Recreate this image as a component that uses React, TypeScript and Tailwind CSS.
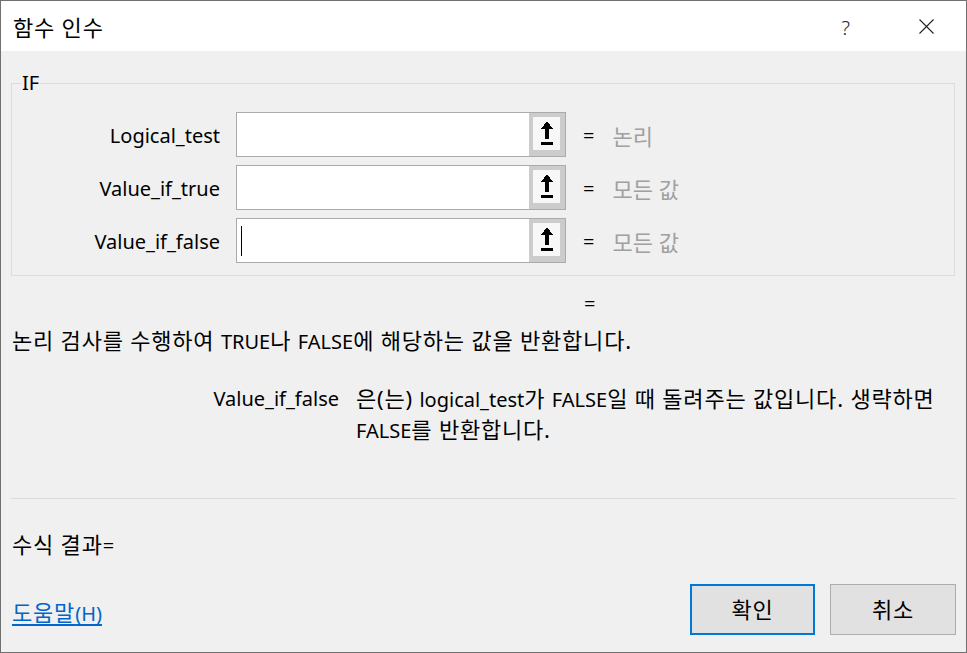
import React from 'react'

const FONT = "font-['Noto_Sans','Noto_Sans_CJK_KR',sans-serif]"

// Hangul runs are set a little larger so they take the width of the original dialog font
function K({ children }: { children: React.ReactNode }) {
  return <span className="text-[22px] tracking-[0.8px]">{children}</span>
}

function PickerIcon() {
  return (
    <svg width="14" height="25" viewBox="0 0 14 25" shapeRendering="crispEdges">
      <polygon points="7,0 13,8 9,8 9,18 5,18 5,8 1,8" fill="#000" />
      <rect x="1" y="21" width="12" height="3" fill="#000" />
    </svg>
  )
}

function ArgRow({ label, hint, caret }: { label: string; hint: string; caret?: boolean }) {
  return (
    <div className="flex items-center h-[45px]">
      <div className="w-[208px] text-right leading-[24px] pt-[3px]">{label}</div>
      <div className="ml-[16px] w-[330px] h-full border border-[#ababab] bg-white flex">
        <div className="flex-1 flex items-center pl-[4px]">
          {caret && <div className="w-px h-[30px] bg-black" />}
        </div>
        <div className="w-[36px] h-full bg-[#cccccc] pl-[4px] pr-[5px] pt-[4px] pb-[6px]">
          <div className="w-full h-full bg-[#f7f7f7] flex items-center justify-center">
            <PickerIcon />
          </div>
        </div>
      </div>
      <span className="ml-[17px] leading-[24px] pt-[3px]">=</span>
      <span className="ml-[18px] leading-[24px] pt-[3px] text-[22px] text-[#a0a0a0]">{hint}</span>
    </div>
  )
}

export default function App() {
  return (
    <div className={`w-[967px] h-[653px] border border-[#707070] bg-[#f0f0f0] flex flex-col text-black text-[20px] ${FONT}`}>
      <div className="h-[50px] shrink-0 bg-white flex items-center pl-[12px] pt-[3px]">
        <span className="leading-[24px] tracking-[0.5px]"><K>함수 인수</K></span>
        <span className="ml-auto leading-[24px] font-light text-[#222]">?</span>
        <svg className="ml-[69px] mr-[32px] -mt-[3px]" width="15" height="15" viewBox="0 0 15 15">
          <path d="M0.5 0.5 L14.5 14.5 M14.5 0.5 L0.5 14.5" stroke="#222" strokeWidth="1.1" fill="none" />
        </svg>
      </div>

      <div className="flex-1 flex flex-col pl-[10px] pr-[10px]">
        <fieldset className="mt-[22px] mr-[1px] border border-[#dcdcdc] pt-[19px] pb-[12px]">
          <legend className="ml-[9px] px-[1px] leading-[20px]">IF</legend>
          <div className="flex flex-col gap-[8px]">
            <ArgRow label="Logical_test" hint="논리" />
            <ArgRow label="Value_if_true" hint="모든 값" />
            <ArgRow label="Value_if_false" hint="모든 값" caret />
          </div>
        </fieldset>

        <div className="mt-[16px] h-[24px] pl-[573px] leading-[24px]">=</div>

        <div className="mt-[12px] h-[24px] pl-[1px] leading-[24px] whitespace-nowrap">
          <K>논리 검사를 수행하여 </K>TRUE<K>나 </K>FALSE<K>에 해당하는 값을 반환합니다.</K>
        </div>

        <div className="mt-[31px] flex">
          <div className="w-[328px] h-[31px] leading-[31px] text-right">Value_if_false</div>
          <div className="ml-[17px] flex flex-col whitespace-nowrap">
            <div className="h-[31px] leading-[31px]">
              <K>은(는) </K>logical_test<K>가 </K>FALSE<K>일 때 돌려주는 값입니다. 생략하면</K>
            </div>
            <div className="h-[31px] leading-[31px]">
              FALSE<K>를 반환합니다.</K>
            </div>
          </div>
        </div>

        <div className="mt-[53px] h-px bg-[#dcdcdc]" />

        <div className="mt-[33px] h-[24px] pl-[1px] leading-[24px]">
          <K>수식 결과</K>=
        </div>

        <div className="mt-[28px] flex items-start">
          <a href="#" className="mt-[16px] h-[24px] pl-[1px] leading-[24px] text-[#0066cc] underline underline-offset-[3px]">
            <K>도움말</K>(H)
          </a>
          <button className="ml-auto w-[125px] h-[51px] border-2 border-[#0078d7] bg-[#e1e1e1] leading-[24px]">
            <K>확인</K>
          </button>
          <button className="ml-[15px] w-[126px] h-[51px] border border-[#adadad] bg-[#e1e1e1] leading-[24px]">
            <K>취소</K>
          </button>
        </div>
      </div>
    </div>
  )
}
